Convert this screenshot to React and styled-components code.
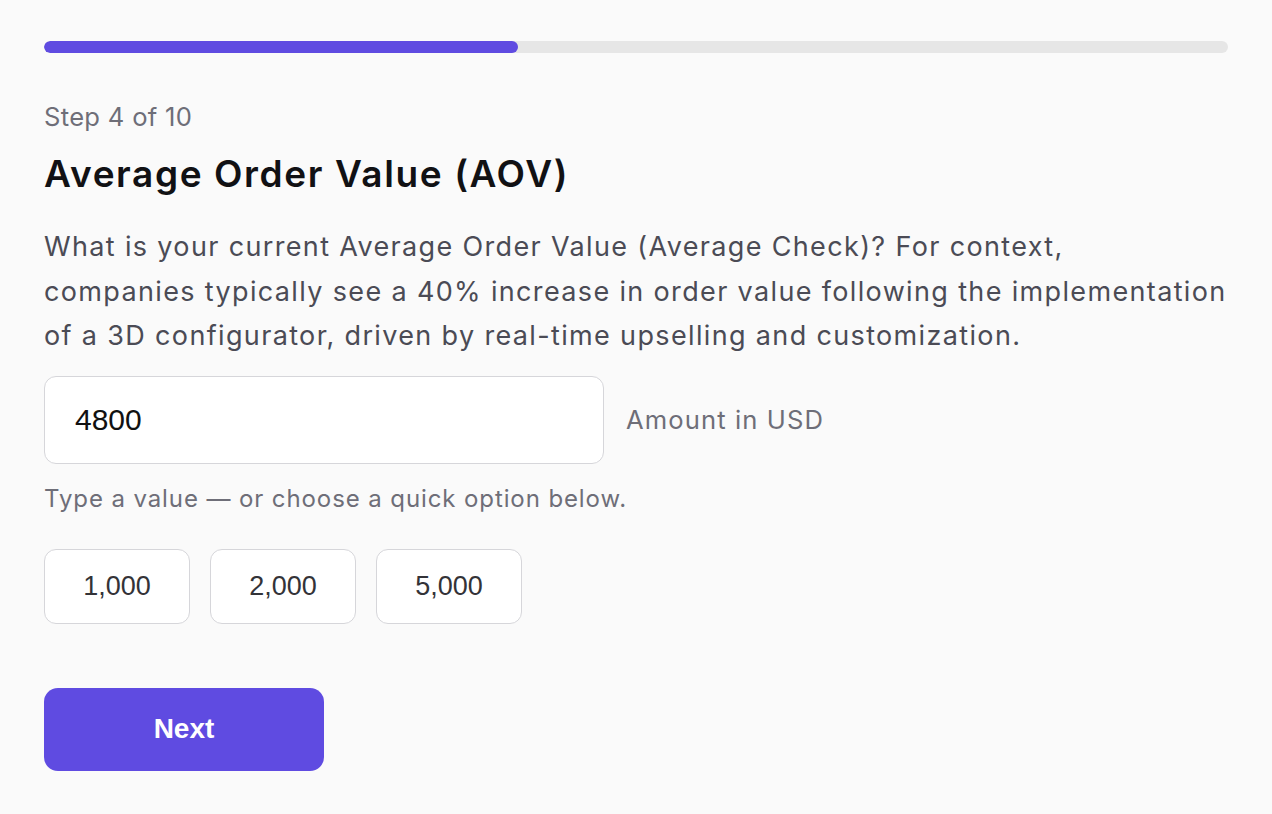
import React, { useState } from 'react';
import styled, { createGlobalStyle } from 'styled-components';

const GlobalStyle = createGlobalStyle`
    html, body {
        margin: 0;
        padding: 0;
        background: #fafafa;
    }
    body {
        font-family: Inter, "Noto Sans", sans-serif;
        -webkit-font-smoothing: antialiased;
    }
`;

const Page = styled.div`
    box-sizing: border-box;
    width: 100%;
    min-height: 814px;
    padding: 41px 44px 40px;
    background: #fafafa;
`;

const Track = styled.div`
    height: 12px;
    border-radius: 6px;
    background: #e6e6e6;
    overflow: hidden;
`;

const Fill = styled.div`
    height: 100%;
    border-radius: 6px;
    background: #5f4be1;
`;

const StepLabel = styled.div`
    margin-top: 45px;
    font-size: 25.6px;
    line-height: 38px;
    letter-spacing: 0.3px;
    color: #6e6e78;
`;

const Title = styled.h1`
    margin: 16px 0 0;
    font-size: 37px;
    line-height: 43px;
    font-weight: 600;
    color: #111114;
    letter-spacing: 1.6px;
`;

const Desc = styled.p`
    margin: 30px 0 0;
    font-size: 27px;
    line-height: 44.5px;
    letter-spacing: 1.35px;
    color: #4b4b55;
    white-space: nowrap;
`;

const InputRow = styled.div`
    display: flex;
    align-items: center;
    gap: 22px;
    margin-top: 17px;
`;

const AmountInput = styled.input`
    box-sizing: border-box;
    width: 560px;
    height: 88px;
    padding: 0 30px;
    border: 1.5px solid #d6d6da;
    border-radius: 12px;
    background: #fff;
    font-family: "Liberation Sans", Arial, sans-serif;
    font-size: 30px;
    color: #111;
    outline: none;
`;

const Unit = styled.span`
    font-size: 25.6px;
    letter-spacing: 1.1px;
    color: #6e6e78;
`;

const Hint = styled.div`
    margin-top: 18px;
    font-size: 24px;
    line-height: 34px;
    letter-spacing: 0.9px;
    color: #6e6e78;
`;

const Options = styled.div`
    display: flex;
    gap: 20px;
    margin-top: 33px;
`;

const OptionButton = styled.button`
    box-sizing: border-box;
    width: 146px;
    height: 75px;
    border: 1.5px solid #d6d6da;
    border-radius: 12px;
    background: #fff;
    font-family: "Liberation Sans", Arial, sans-serif;
    font-size: 27px;
    color: #333338;
    cursor: pointer;
`;

const NextButton = styled.button`
    box-sizing: border-box;
    display: block;
    width: 280px;
    height: 83px;
    margin-top: 64px;
    border: none;
    border-radius: 14px;
    background: #5f4be1;
    font-family: "Liberation Sans", Arial, sans-serif;
    font-size: 28px;
    font-weight: 700;
    color: #fff;
    cursor: pointer;
`;

const quickOptions = [1000, 2000, 5000];

export default function App() {
    const [value, setValue] = useState('4800');
    const step = 4;
    const total = 10;

    return (
        <Page>
            <GlobalStyle />
            <Track>
                <Fill style={{ width: `${(step / total) * 100}%` }} />
            </Track>
            <StepLabel>Step {step} of {total}</StepLabel>
            <Title>Average Order Value (AOV)</Title>
            <Desc>
                What is your current Average Order Value (Average Check)? For context,
                <br />
                companies typically see a 40% increase in order value following the implementation
                <br />
                of a 3D configurator, driven by real-time upselling and customization.
            </Desc>
            <InputRow>
                <AmountInput value={value} onChange={e => setValue(e.target.value)} />
                <Unit>Amount in USD</Unit>
            </InputRow>
            <Hint>Type a value — or choose a quick option below.</Hint>
            <Options>
                {quickOptions.map(opt => (
                    <OptionButton key={opt} onClick={() => setValue(String(opt))}>
                        {opt.toLocaleString('en-US')}
                    </OptionButton>
                ))}
            </Options>
            <NextButton>Next</NextButton>
        </Page>
    );
}
